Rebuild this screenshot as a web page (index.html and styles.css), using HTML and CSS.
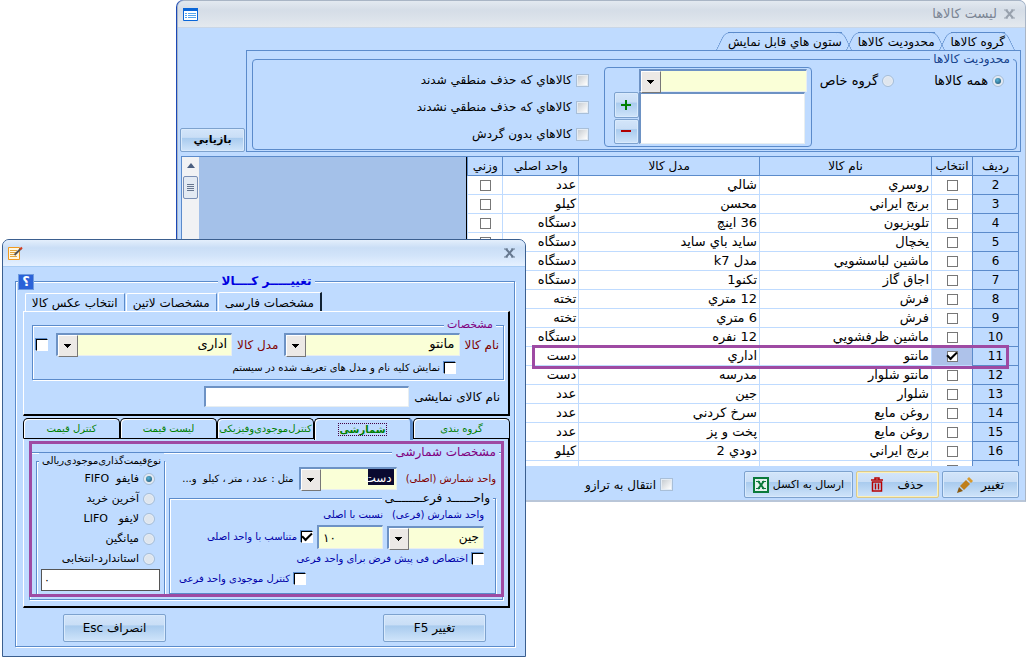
FILE: index.html
```html
<!DOCTYPE html>
<html lang="fa" dir="rtl">
<head>
    <meta charset="UTF-8">
    <meta name="viewport" content="width=device-width, initial-scale=1.0">
    <title>لیست کالاها</title>
    <link rel="stylesheet" href="styles.css">
</head>
<body>
    <!-- Goods list window -->
    <div class="window list-window">
        <div class="titlebar inactive">
            <button class="close" aria-label="بستن"><svg width="11" height="10" viewBox="0 0 11 10"><path d="M0 1h4M7 1h4M0 9h4M7 9h4" stroke="#98a1ad"/><path d="M2 1l7 8M9 1L2 9" stroke="#98a1ad" stroke-width="2"/></svg></button>
            <h1>لیست کالاها</h1>
            <svg class="title-icon" width="15" height="13" viewBox="0 0 15 13"><path d="M.5.5h14v12H.5z" fill="#fff" stroke="#0a66d8"/><path d="M0 0h15v3H0z" fill="#0a66d8"/><path d="M2 5.500h2M5 5.500h8M2 7.500h2M5 7.500h8M2 9.500h2M5 9.500h8" stroke="#55a5ee"/></svg>
        </div>

        <div class="list-body">
            <div class="filters">
                <div class="filter-main">
                    <div class="slant-tabs">
                        <button class="slant-tab active">گروه کالاها</button>
                        <button class="slant-tab">محدودیت کالاها</button>
                        <button class="slant-tab">ستون هاي قابل نمايش</button>
                    </div>
                    <div class="filter-panel">
                        <fieldset class="filter-group">
                            <legend>محدودیت کالاها</legend>
                            <label class="option all-goods"><input type="radio" name="scope" checked> همه کالاها</label>
                            <label class="option some-goods"><input type="radio" name="scope"> گروه خاص</label>
                            <div class="group-picker">
                                <div class="combo"><select aria-label="گروه"><option></option></select></div>
                                <div class="picker-row">
                                    <textarea aria-label="گروه هاي انتخابي"></textarea>
                                    <div class="picker-buttons">
                                        <button class="button plus" aria-label="افزودن"><svg width="12" height="12" viewBox="0 0 12 12"><path d="M6 1v10M1 6h10" stroke="#008000" stroke-width="2"/></svg></button>
                                        <button class="button minus" aria-label="حذف"><svg width="12" height="12" viewBox="0 0 12 12"><path d="M1 6h10" stroke="#b00000" stroke-width="2"/></svg></button>
                                    </div>
                                </div>
                            </div>
                            <div class="flags">
                                <label class="option"><input type="checkbox" class="soft"> کالاهاي که حذف منطقي شدند</label>
                                <label class="option"><input type="checkbox" class="soft"> کالاهاي که حذف منطقي نشدند</label>
                                <label class="option"><input type="checkbox" class="soft"> کالاهاي بدون گردش</label>
                            </div>
                        </fieldset>
                    </div>
                </div>
                <button class="button refresh">بازيابي</button>
            </div>

            <div class="grid">
                <table class="goods">
                    <thead>
                        <tr><th class="c-row">رديف</th><th class="c-pick">انتخاب</th><th class="c-name">نام کالا</th><th class="c-model">مدل کالا</th><th class="c-unit">واحد اصلي</th><th class="c-weight">وزني</th></tr>
                    </thead>
                    <tbody>
                        <tr><th>2</th><td class="tick"><input type="checkbox" aria-label="انتخاب 2"></td><td>روسري</td><td>شالي</td><td>عدد</td><td class="tick"><input type="checkbox" aria-label="وزني 2"></td></tr>
                        <tr><th>3</th><td class="tick"><input type="checkbox" aria-label="انتخاب 3"></td><td>برنج ايراني</td><td>محسن</td><td>کيلو</td><td class="tick"><input type="checkbox" aria-label="وزني 3"></td></tr>
                        <tr><th>4</th><td class="tick"><input type="checkbox" aria-label="انتخاب 4"></td><td>تلويزيون</td><td>36 اينچ</td><td>دستگاه</td><td class="tick"><input type="checkbox" aria-label="وزني 4"></td></tr>
                        <tr><th>5</th><td class="tick"><input type="checkbox" aria-label="انتخاب 5"></td><td>يخچال</td><td>سايد باي سايد</td><td>دستگاه</td><td class="tick"><input type="checkbox" aria-label="وزني 5"></td></tr>
                        <tr><th>6</th><td class="tick"><input type="checkbox" aria-label="انتخاب 6"></td><td>ماشين لباسشويي</td><td>مدل k7</td><td>دستگاه</td><td class="tick"></td></tr>
                        <tr><th>7</th><td class="tick"><input type="checkbox" aria-label="انتخاب 7"></td><td>اجاق گاز</td><td>تکنو1</td><td>دستگاه</td><td class="tick"></td></tr>
                        <tr><th>8</th><td class="tick"><input type="checkbox" aria-label="انتخاب 8"></td><td>فرش</td><td>12 متري</td><td>تخته</td><td class="tick"></td></tr>
                        <tr><th>9</th><td class="tick"><input type="checkbox" aria-label="انتخاب 9"></td><td>فرش</td><td>6 متري</td><td>تخته</td><td class="tick"></td></tr>
                        <tr><th>10</th><td class="tick"><input type="checkbox" aria-label="انتخاب 10"></td><td>ماشين ظرفشويي</td><td>12 نفره</td><td>دستگاه</td><td class="tick"></td></tr>
                        <tr class="current"><th>11</th><td class="tick"><input type="checkbox" aria-label="انتخاب 11" checked></td><td>مانتو</td><td>اداري</td><td>دست</td><td class="tick"></td></tr>
                        <tr><th>12</th><td class="tick"><input type="checkbox" aria-label="انتخاب 12"></td><td>مانتو شلوار</td><td>مدرسه</td><td>دست</td><td class="tick"></td></tr>
                        <tr><th>13</th><td class="tick"><input type="checkbox" aria-label="انتخاب 13"></td><td>شلوار</td><td>جين</td><td>عدد</td><td class="tick"></td></tr>
                        <tr><th>14</th><td class="tick"><input type="checkbox" aria-label="انتخاب 14"></td><td>روغن مايع</td><td>سرخ کردني</td><td>عدد</td><td class="tick"></td></tr>
                        <tr><th>15</th><td class="tick"><input type="checkbox" aria-label="انتخاب 15"></td><td>روغن مايع</td><td>پخت و پز</td><td>عدد</td><td class="tick"></td></tr>
                        <tr><th>16</th><td class="tick"><input type="checkbox" aria-label="انتخاب 16"></td><td>برنج ايراني</td><td>دودي 2</td><td>کيلو</td><td class="tick"></td></tr>
                        <tr><th></th><td class="tick"><input type="checkbox" aria-label="انتخاب"></td><td></td><td></td><td></td><td class="tick"></td></tr>
                    </tbody>
                </table>
                <div class="scrollbar">
                    <span class="arrow-up"></span>
                    <span class="thumb"></span>
                </div>
                <div class="mark row-mark"></div>
            </div>

            <div class="actions">
                <button class="button edit">تغيير <svg width="16" height="16" viewBox="0 0 16 16"><path d="M0 16l2-6 4 4z" fill="#8a5a10"/><path d="M3 9l6-6 4 4-6 6z" fill="#bf7f1c"/><path d="M10 2l2-2 4 4-2 2z" fill="#d99a2b"/></svg></button>
                <button class="button delete">حذف <svg width="12" height="15" viewBox="0 0 12 15"><path d="M0 3h12M4 2.500V1h4v1.500M1.500 5h9v9h-9zM4.500 6.500v6M7.500 6.500v6" fill="none" stroke="#b80000" stroke-width="1.500"/></svg></button>
                <button class="button excel">ارسال به اکسل <svg width="16" height="16" viewBox="0 0 16 16"><path d="M1 1h14v14H1z" fill="#e6f2ee" stroke="#0b7a3b" stroke-width="2"/><path d="M5 4l6 8M11 4l-6 8" stroke="#0b7a3b" stroke-width="2"/><path d="M3 4.500h4M9 4.500h4M3 11.500h4M9 11.500h4" stroke="#0b7a3b"/></svg></button>
                <label class="option scale"><input type="checkbox" class="soft"> انتقال به ترازو</label>
            </div>
        </div>
    </div>

    <!-- Edit goods dialog -->
    <div class="window dialog">
        <div class="titlebar">
            <button class="close" aria-label="بستن"><svg width="11" height="10" viewBox="0 0 11 10"><path d="M0 1h4M7 1h4M0 9h4M7 9h4" stroke="#66788f"/><path d="M2 1l7 8M9 1L2 9" stroke="#66788f" stroke-width="2"/></svg></button>
            <svg class="title-icon" width="15" height="14" viewBox="0 0 15 14"><path d="M.5 1.500h11v12H.5z" fill="#fff8e0" stroke="#f09a20"/><path d="M2 4.500h7M2 6.500h6M2 8.500h4M2 10.500h7" stroke="#e0a53f"/><path d="M6.500 9L13 2.500" stroke="#555" stroke-width="2"/><path d="M12 3.500l2-2" stroke="#d33c20" stroke-width="2"/></svg>
        </div>

        <div class="dialog-body">
            <button class="help" aria-label="راهنما">؟</button>
            <fieldset class="etched outer">
                <legend>تغییـــــر کــــالا</legend>

                <div class="tabs">
                    <button class="tab active">مشخصات فارسی</button>
                    <button class="tab">مشخصات لاتین</button>
                    <button class="tab">انتخاب عکس کالا</button>
                </div>
                <div class="panel">
                    <fieldset class="etched spec">
                        <legend>مشخصات</legend>
                        <div class="form-row">
                            <label for="name" class="required">نام کالا</label>
                            <div class="combo wide"><select id="name"><option>مانتو</option></select></div>
                            <label for="model" class="required">مدل کالا</label>
                            <div class="combo wide"><select id="model"><option>اداری</option></select></div>
                            <input type="checkbox" class="sunken" aria-label="مدل کالا">
                        </div>
                        <label class="option show-all"><input type="checkbox" class="sunken"> نمایش کلیه نام و مدل های تعریف شده در سیستم</label>
                    </fieldset>
                    <div class="form-row display-name">
                        <label for="display">نام کالای نمایشی</label>
                        <input type="text" id="display">
                    </div>
                </div>

                <div class="lower-tabs">
                    <button class="lower-tab">گروه بندی</button>
                    <button class="lower-tab active"><span>شمارشی</span></button>
                    <button class="lower-tab">کنترل‌موجودی‌وفیزیکی</button>
                    <button class="lower-tab">لیست قیمت</button>
                    <button class="lower-tab">کنترل قیمت</button>
                </div>
                <div class="panel lower">
                    <fieldset class="etched counting">
                        <legend>مشخصات شمارشی</legend>
                        <div class="units">
                            <div class="form-row main-unit">
                                <label for="unit" class="required">واحد شمارش (اصلی)</label>
                                <div class="combo"><select id="unit" class="picked"><option>دست</option></select></div>
                                <span>مثل : عدد ، متر ، کیلو&nbsp; و...</span>
                            </div>
                            <fieldset class="etched sub-unit">
                                <legend>واحــــــد فرعــــــــی</legend>
                                <div class="sub-grid">
                                    <label for="sub">واحد شمارش (فرعی)</label>
                                    <label for="ratio">نسبت با اصلی</label>
                                    <span></span>
                                    <div class="combo"><select id="sub"><option>جین</option></select></div>
                                    <input type="text" id="ratio" value="۱۰">
                                    <label class="option"><input type="checkbox" class="sunken" checked> متناسب با واحد اصلی</label>
                                </div>
                                <label class="option default-unit"><input type="checkbox" class="sunken"> اختصاص فی پیش فرض برای واحد فرعی</label>
                                <label class="option stock-unit"><input type="checkbox" class="sunken"> کنترل موجودی واحد فرعی</label>
                            </fieldset>
                        </div>
                        <fieldset class="etched pricing">
                            <legend>نوع‌قیمت‌گذاری‌موجودی‌ریالی</legend>
                            <label class="option"><input type="radio" name="pricing" checked> فایفو&nbsp; FIFO</label>
                            <label class="option"><input type="radio" name="pricing"> آخرین خرید</label>
                            <label class="option"><input type="radio" name="pricing"> لایفو&nbsp;&nbsp; LIFO</label>
                            <label class="option"><input type="radio" name="pricing"> میانگین</label>
                            <label class="option"><input type="radio" name="pricing"> استاندارد-انتخابی</label>
                            <input type="text" aria-label="قیمت استاندارد" value="۰">
                        </fieldset>
                    </fieldset>
                    <div class="mark panel-mark"></div>
                </div>

                <div class="dialog-actions">
                    <button class="button">تغییر F5</button>
                    <button class="button">انصراف Esc</button>
                </div>
            </fieldset>
        </div>
    </div>
</body>
</html>
```

FILE: styles.css
```css
* {
    box-sizing: border-box;
}
body {
    margin: 0;
    min-height: 100vh;
    background: #fff;
    font-family: "DejaVu Sans", "Noto Sans", sans-serif;
    font-size: 12px;
    line-height: 16px;
    color: #000;
}
button, input, select, textarea {
    font: inherit;
    color: inherit;
    margin: 0;
    border-radius: 0;
}
fieldset {
    margin: 0;
    padding: 0;
    min-width: 0;
    border: 1px solid #5b8bcb;
}
legend {
    padding: 0 3px;
}

/* Windows */
.window {
    position: absolute;
    background: #bfdbff;
    border-radius: 7px 7px 0 0;
}
.list-window {
    top: 0;
    left: 177px;
    right: 1px;
    border: 1px solid #a9b5c5;
    border-bottom: 2px solid #b9c6d8;
    box-shadow: -1px 0 0 #1a48b8;
}
.dialog {
    top: 239px;
    left: 2px;
    width: 51vw;
    min-width: 524px;
    border: 1px solid #3b5f8f;
    font-size: 11px;
}
.titlebar {
    display: flex;
    align-items: center;
    height: 27px;
    padding: 0 10px 0 5px;
    border-radius: 6px 6px 0 0;
    border-bottom: 1px solid #a8ccf4;
    background: linear-gradient(#e4effc, #cadef6 30%, #d2e4fa 60%, #e6f1ff);
}
.titlebar.inactive {
    background: linear-gradient(#e3e9f0, #d5dde7 35%, #dbe2ea 65%, #e4e9ee);
    border-bottom-color: #c9d6e6;
    color: #7b8594;
}
.titlebar h1 {
    margin: 0 7px;
    font-size: 13px;
    font-weight: normal;
}
.title-icon {
    margin-right: auto;
}
.close {
    display: flex;
    padding: 0;
    border: 0;
    background: none;
}

/* Controls */
.button {
    display: flex;
    align-items: center;
    justify-content: center;
    padding: 0;
    border: 1px solid #7da2ce;
    border-radius: 2px;
    box-shadow: inset 0 0 0 1px #d9eafc;
    background: linear-gradient(#d3e5fa, #c9def6 38%, #a9cbee 42%, #cfe4fa);
}
.option {
    display: flex;
    align-items: center;
    gap: 4px;
    white-space: nowrap;
}
input[type="checkbox"], input[type="radio"] {
    appearance: none;
    display: grid;
    place-items: center;
    flex: none;
    width: 12px;
    height: 12px;
    background: #fff;
    border: 1px solid #777;
}
input[type="checkbox"].soft {
    width: 13px;
    height: 13px;
    border: 2px solid #e4ecf4;
    outline: 1px solid #a9bfd8;
    outline-offset: -1px;
    background: linear-gradient(135deg, #c8cdd2, #fff);
}
input[type="checkbox"].sunken {
    border-color: #000 #fff #fff #000;
    box-shadow: -1px -1px 0 #5b8bcb;
}
input[type="checkbox"]:checked::before {
    content: "";
    width: 8px;
    height: 4px;
    border: 2px solid #000;
    border-width: 0 0 2px 2px;
    transform: rotate(-45deg) translate(1px, -1px);
}
input[type="radio"] {
    border-color: #a5bdd8;
    border-radius: 50%;
    box-shadow: inset 0 0 0 1px #e8eef5;
    background: #dfe6ee;
}
input[type="radio"]:checked::before {
    content: "";
    width: 6px;
    height: 6px;
    border-radius: 50%;
    background: radial-gradient(circle at 40% 35%, #58b5d8, #1a4a6a);
}
input[type="text"], textarea, .combo {
    border: 1px solid #e8eef0;
    border-top: 2px solid #6d92c4;
    border-left: 2px solid #6d92c4;
    background: #fff;
}
.combo {
    position: relative;
    height: 23px;
    background: #faffd7;
}
.combo select {
    display: block;
    appearance: none;
    width: 100%;
    height: 20px;
    padding: 0 4px 2px 20px;
    border: 0;
    background: none;
    font-size: 12px;
}
.combo::after {
    content: "";
    position: absolute;
    top: 0;
    left: 0;
    width: 18px;
    height: 20px;
    border: 1px solid #fff;
    border-right-color: #777;
    border-bottom-color: #777;
    background: linear-gradient(#000, #000) 5px 8px / 7px 1px no-repeat, linear-gradient(#000, #000) 6px 9px / 5px 1px no-repeat, linear-gradient(#000, #000) 7px 10px / 3px 1px no-repeat, linear-gradient(#000, #000) 8px 11px / 1px 1px no-repeat, #ece9e6;
    pointer-events: none;
}
.combo select.picked {
    color: #fff;
    background: linear-gradient(#0a0a30, #0a0a30) right 2px top 0 / 26px 16px no-repeat;
}

/* List window */
.list-body {
    padding: 4px 6px 2px 3px;
}
.filters {
    display: flex;
    align-items: flex-end;
    gap: 1px;
    margin-left: -1px;
    margin-right: -2px;
}
.filter-main {
    flex: 1;
}
.slant-tabs {
    display: flex;
    gap: 16px;
    padding-right: 16px;
}
.slant-tab {
    position: relative;
    height: 18px;
    padding: 0;
    border: 0;
    border-top: 1px solid #5b8bcb;
    background: none;
    white-space: nowrap;
}
.slant-tab::before, .slant-tab::after {
    content: "";
    position: absolute;
    top: -1px;
    width: 9px;
    height: 18px;
    border-top: 1px solid #5b8bcb;
}
.slant-tab::before {
    left: -8px;
    border-left: 1px solid #5b8bcb;
    border-top-left-radius: 6px;
    transform: skewX(-26deg);
}
.slant-tab::after {
    right: -6px;
    width: 7px;
    border-right: 1px solid #5b8bcb;
    border-top-right-radius: 6px;
    transform: skewX(26deg);
}
.filter-panel {
    padding: 0 3px 1px 5px;
    border: 1px solid #5b8bcb;
}
.filter-group {
    display: flex;
    align-items: flex-start;
    height: 99px;
    padding: 0 12px 3px;
    border-radius: 4px;
}
.filter-group legend {
    margin-right: -9px;
    color: #15428b;
}
.all-goods, .some-goods {
    margin-top: 6px;
    font-size: 13px;
}
.some-goods {
    margin-right: 40px;
}
.group-picker {
    width: 208px;
    margin-right: 8px;
    padding: 1px 4px 2px 9px;
    border: 1px solid #5b8bcb;
    border-radius: 4px;
}
.group-picker .combo {
    margin-left: 25px;
}
.picker-row {
    display: flex;
    padding-right: 2px;
}
.picker-row textarea {
    flex: 1;
    width: 0;
    height: 52px;
    resize: none;
}
.picker-buttons {
    display: grid;
    gap: 1px;
}
.picker-buttons .button {
    width: 25px;
}
.flags {
    display: grid;
    gap: 11px;
    margin-right: 15px;
    padding-top: 5px;
}
.refresh {
    width: 65px;
    height: 24px;
    font-size: 11px;
    font-weight: bold;
}
.grid {
    position: relative;
    display: flex;
    justify-content: space-between;
    height: 310px;
    margin-top: 4px;
    overflow: hidden;
    border: 1px solid #5b8bcb;
    border-bottom: 0;
    background: #a4c1e9;
}
.goods {
    width: 66%;
    table-layout: fixed;
    border-collapse: separate;
    border-spacing: 0;
    border-left: 1px solid #000;
    background: #fff;
    font-size: 13px;
}
.goods th, .goods td {
    height: 19px;
    padding: 0 2px;
    line-height: 16px;
    font-weight: normal;
    white-space: nowrap;
    overflow: hidden;
    border-left: 1px solid #bfdbff;
    border-bottom: 1px solid #bfdbff;
}
.goods th {
    background: #bfdbff;
    border-color: #5b8bcb;
    font-size: 12px;
}
.goods td.tick {
    padding: 0;
}
.goods .tick input {
    margin: 0 auto;
    width: 11px;
    height: 11px;
}
.goods .current .tick:nth-child(2) {
    background: #aec2ea;
}
.c-row { width: 46px; }
.c-pick { width: 41px; }
.c-name { width: 172px; }
.c-unit { width: 76px; }
.c-weight { width: 35px; }
.scrollbar {
    width: 17px;
    height: 100%;
    background: #f1f2f4;
}
.arrow-up {
    display: block;
    width: 0;
    margin: 6px auto 8px;
    border: 4px solid transparent;
    border-top: 0;
    border-bottom: 5px solid #4b5f80;
}
.thumb {
    display: block;
    height: 23px;
    margin: 0 1px;
    border: 1px solid #7a8fb5;
    border-radius: 2px;
    background: repeating-linear-gradient(#66758f 0 1px, transparent 1px 2px) center / 7px 7px no-repeat, #e3eaf3;
}
.mark {
    position: absolute;
    border: 3px solid #9e4aa3;
    pointer-events: none;
}
.row-mark {
    top: 188px;
    right: 9px;
    width: 57%;
    height: 24px;
}
.actions {
    display: flex;
    gap: 3px;
    padding-top: 5px;
}
.actions .button {
    gap: 8px;
    height: 27px;
}
.actions .edit {
    width: 77px;
}
.actions .delete {
    width: 83px;
    gap: 14px;
    border-color: #d9c98c;
    box-shadow: inset 0 0 0 1px #fdf0b8;
}
.actions .excel {
    width: 109px;
    gap: 4px;
    font-size: 11px;
}
.scale {
    margin-right: 68px;
}

/* Dialog */
.dialog-body {
    position: relative;
    padding: 6px 10px 9px 12px;
}
.help {
    position: absolute;
    top: 7px;
    left: 15px;
    width: 16px;
    height: 16px;
    padding: 0;
    border: 1px solid #6f9bdf;
    background: #2b62d8;
    color: #fff;
    font-size: 13px;
    font-weight: bold;
    line-height: 12px;
}
.etched {
    border: 1px solid #5b8bcb;
    box-shadow: 1px 1px 0 #fff, inset 1px 1px 0 #fff;
}
.etched > legend {
    background: #bfdbff;
}
.outer {
    padding: 3px 4px 4px 7px;
}
.outer > legend {
    margin: 0 auto;
    font-size: 12px;
    font-weight: bold;
    color: #0000e0;
}
.tabs {
    display: flex;
    align-items: flex-end;
    gap: 1px;
    padding-right: 188px;
}
.tab {
    height: 18px;
    padding: 0 6px;
    border: 1px solid #fff;
    border-bottom: 0;
    border-right-color: #5b8bcb;
    border-radius: 2px 0 0 0;
    background: none;
    white-space: nowrap;
    font-size: 12px;
}
.tab.active {
    height: 20px;
    margin-bottom: -1px;
    border-right: 2px solid #123;
    background: #bfdbff;
}
.panel {
    position: relative;
    padding: 5px 4px 7px 8px;
    border: 1px solid #fff;
    border-right: 2px solid #000;
    border-bottom: 2px solid #000;
}
.form-row {
    display: flex;
    align-items: center;
    gap: 5px;
    white-space: nowrap;
}
.required {
    color: #800000;
}
.spec {
    padding: 0 4px 3px 3px;
}
.spec .required, .display-name {
    font-size: 12px;
}
.spec legend {
    margin-right: 3px;
}
.spec legend, .counting > legend {
    color: #800080;
}
.combo.wide {
    flex: 1;
}
.combo.wide select {
    font-size: 13px;
}
.spec .form-row .sunken {
    margin-right: 3px;
}
.show-all {
    margin-right: 43px;
    padding-top: 4px;
    font-size: 10px;
}
.display-name {
    margin: 6px 4px 0 0;
}
.display-name input {
    width: 205px;
    height: 21px;
}
.lower-tabs {
    display: flex;
    align-items: flex-start;
    margin-top: 2px;
    color: #008000;
}
.lower-tab {
    flex: 1;
    height: 20px;
    padding: 0;
    border: 1px solid #000;
    border-bottom: 0;
    border-radius: 5px 5px 0 0;
    box-shadow: inset 1px 1px 0 #fff;
    background: #bfdbff;
    font-size: 10px;
    white-space: nowrap;
}
.lower-tab.active {
    position: relative;
    z-index: 1;
    height: 22px;
    border-right: 3px solid #5b8bcb;
    font-size: 10px;
    font-weight: bold;
}
.lower-tab.active span {
    outline: 1px dotted #404;
}
.panel.lower {
    margin-top: -2px;
    padding: 5px 5px 6px;
    border-top-color: #000;
}
.counting {
    display: flex;
    align-items: flex-start;
    height: 156px;
    padding: 0 6px 3px;
    font-size: 10px;
}
.counting > legend {
    margin-right: -3px;
    font-size: 12px;
}
.units {
    flex: 1;
    padding-top: 7px;
}
.main-unit .combo {
    width: 98px;
    margin-right: 4px;
}
.sub-unit {
    height: 104px;
    padding: 1px 11px 0 4px;
    color: #0000a8;
}
.sub-unit legend {
    margin-right: -9px;
    color: #000;
    font-size: 12px;
}
.sub-grid {
    display: grid;
    grid-template-columns: 97px 66px 1fr;
    gap: 2px 4px;
    align-items: center;
    white-space: nowrap;
}
.sub-grid > label {
    justify-self: start;
}
.sub-grid .combo, .sub-grid select {
    color: #000;
}
.sub-grid input[type="text"] {
    width: 100%;
    height: 24px;
    background: #faffd7;
    color: #000;
    font-size: 12px;
    direction: ltr;
    padding-left: 4px;
}
.default-unit {
    padding-top: 2px;
}
.stock-unit {
    margin-right: 178px;
    padding-top: 4px;
}
.pricing {
    width: 129px;
    margin: -7px 4px 0 0;
    padding: 0 4px 4px;
    font-size: 11px;
}
.pricing legend {
    margin-right: -4px;
    font-size: 10px;
}
.pricing .option {
    height: 20px;
    padding-right: 5px;
}
.pricing input[type="text"] {
    width: 100%;
    height: 22px;
    border: 1px solid #555;
    direction: ltr;
}
.panel-mark {
    top: 2px;
    right: 4px;
    bottom: 9px;
    left: 5px;
}
.dialog-actions {
    display: flex;
    justify-content: space-between;
    padding: 6px 24px 0 40px;
}
.dialog-actions .button {
    width: 103px;
    height: 28px;
    font-size: 12px;
}
```
